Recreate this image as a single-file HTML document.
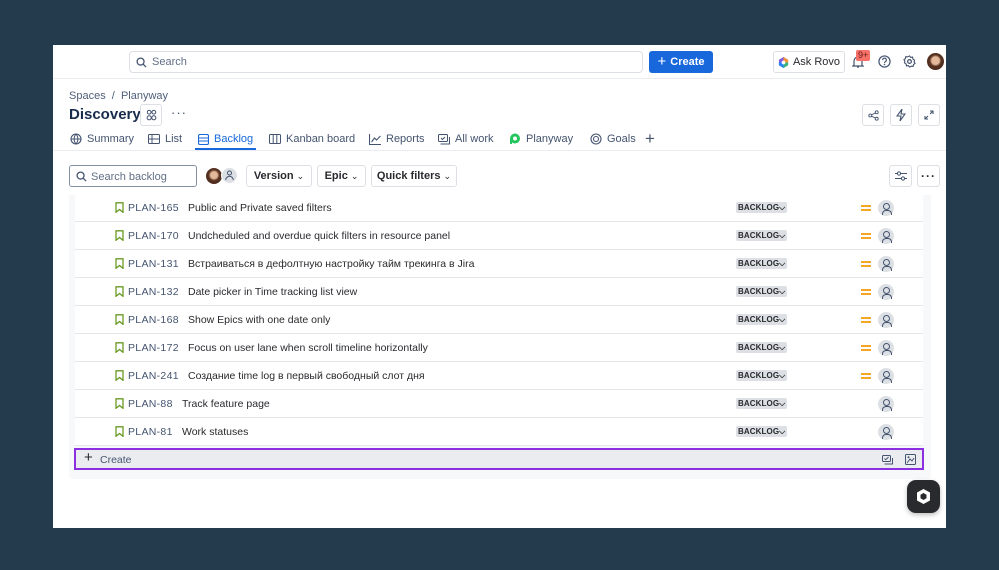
<!DOCTYPE html>
<html><head><meta charset="utf-8">
<style>
*{box-sizing:border-box;margin:0;padding:0}
body{width:999px;height:570px;background:#243b4d;font-family:"Liberation Sans","Noto Sans CJK SC",sans-serif;position:relative;overflow:hidden;color:#292a2e}
.frame{position:absolute;left:53px;top:45px;width:893px;height:483px;background:#fff;overflow:hidden}
.abs{position:absolute}
.btn{position:absolute;border:1px solid #dcdfe4;border-radius:3px;background:#fff;display:flex;align-items:center;justify-content:center;font-size:11px;color:#292a2e;font-weight:bold}
svg{display:block}
.tab{position:absolute;top:88px;font-size:11px;color:#44546f;display:flex;align-items:center;gap:5px}
.row{position:absolute;left:22px;width:848px;height:28px;background:#fff;border-bottom:1px solid #e4e6ea;font-size:10.5px;color:#292a2e}
.row .ic{position:absolute;left:40px;top:8px}
.row .k{position:absolute;left:53px;top:8px;color:#44546f;letter-spacing:0.3px}
.row .s{position:absolute;top:8px}
.row .lz{position:absolute;left:661px;top:8px;background:#dcdfe4;border-radius:2px;font-size:8px;font-weight:bold;padding:1px 2px;height:11px;line-height:9px;color:#292a2e;letter-spacing:0.1px}
.row .pr{position:absolute;left:786px;top:11px;width:10px;height:6px;border-top:2px solid #f5a623;border-bottom:2px solid #f5a623}
.row .av{position:absolute;left:803px;top:6px;width:16px;height:16px;border-radius:50%;background:#dcdfe4}
.row .av::before{content:"";position:absolute;left:5px;top:3px;width:5px;height:5px;border:1px solid #44546f;border-radius:50%}
.row .av::after{content:"";position:absolute;left:3.5px;top:9.5px;width:8px;height:4px;border:1px solid #44546f;border-bottom:none;border-radius:4px 4px 0 0}
</style></head><body>
<div class="frame">
  <div class="abs" style="left:0;top:33px;width:893px;height:1px;background:#ebecf0"></div>
  <div class="abs" style="left:76px;top:6px;width:514px;height:22px;border:1px solid #dcdfe4;border-radius:4px;font-size:11px;color:#626f86;padding:4px 0 0 22px">Search
    <svg class="abs" style="left:6px;top:5px" width="11" height="11" viewBox="0 0 12 12"><circle cx="5" cy="5" r="3.8" fill="none" stroke="#44546f" stroke-width="1.4"/><path d="M8 8l3 3" stroke="#44546f" stroke-width="1.4"/></svg></div>
  <div class="abs" style="left:596px;top:6px;width:64px;height:22px;background:#1868db;border-radius:3px;color:#fff;font-size:11px;font-weight:bold;display:flex;align-items:center;justify-content:center;gap:4px"><span style="font-size:15px;font-weight:normal;margin-top:-2px">+</span>Create</div>
  <div class="btn" style="left:720px;top:6px;width:72px;height:22px;font-weight:normal;gap:4px">
    <svg width="11" height="11" viewBox="0 0 12 12"><path d="M6 0L11 3v6L6 12 1 9V3z" fill="#7f5fe0"/><path d="M6 0L11 3v3H6z" fill="#f79232"/><path d="M1 6h5v6L1 9z" fill="#2684ff"/><path d="M6 6h5v3L6 12z" fill="#36b37e"/><circle cx="6" cy="6" r="2" fill="#fff"/></svg>Ask Rovo</div>
  <svg class="abs" style="left:799px;top:10px" width="12" height="14" viewBox="0 0 12 14"><path d="M2 10V6a4 4 0 018 0v4l1 1H1z M5 12h2" fill="none" stroke="#44546f" stroke-width="1.2"/></svg>
  <div class="abs" style="left:803px;top:5px;background:#f87168;color:#5d1f1a;font-size:9px;padding:0 2px;border-radius:2px;height:11px;line-height:11px">9+</div>
  <svg class="abs" style="left:825px;top:10px" width="13" height="13" viewBox="0 0 14 14"><circle cx="7" cy="7" r="6" fill="none" stroke="#44546f" stroke-width="1.3"/><path d="M5 5.5a2 2 0 113 1.6c-.8.5-1 .9-1 1.6" fill="none" stroke="#44546f" stroke-width="1.2"/><circle cx="7" cy="10.3" r=".8" fill="#44546f"/></svg>
  <svg class="abs" style="left:850px;top:10px" width="13" height="13" viewBox="0 0 14 14"><circle cx="7" cy="7" r="2" fill="none" stroke="#44546f" stroke-width="1.3"/><path d="M7 1l1.2 1.6 2-.4.4 2L12.4 5.6 12 7.6l1 1.4-1.6 1.2-.4 2-2-.2L7 13l-1.2-1.6-2 .4-.4-2L1.6 8.4 2 6.4 1 5l1.6-1.2.4-2 2 .2z" fill="none" stroke="#44546f" stroke-width="1.2"/></svg>
  <div class="abs" style="left:874px;top:8px;width:17px;height:17px;border-radius:50%;background:radial-gradient(circle at 50% 45%,#e3b99a 0 30%,#5a3221 45%,#3b2316 100%)"></div>

  <div class="abs" style="left:16px;top:45px;font-size:11px;color:#505f79">Spaces&nbsp;&nbsp;/&nbsp;&nbsp;Planyway</div>
  <div class="abs" style="left:16px;top:61px;font-size:15px;font-weight:bold;color:#172b4d">Discovery</div>
  <div class="btn" style="left:87px;top:59px;width:22px;height:22px"><svg width="13" height="12" viewBox="0 0 14 12"><circle cx="4.5" cy="3" r="2" fill="none" stroke="#44546f" stroke-width="1.1"/><circle cx="9.5" cy="3" r="2" fill="none" stroke="#44546f" stroke-width="1.1"/><circle cx="4.5" cy="9" r="2.2" fill="none" stroke="#44546f" stroke-width="1.1"/><circle cx="9.5" cy="9" r="2.2" fill="none" stroke="#44546f" stroke-width="1.1"/></svg></div>
  <div class="abs" style="left:118px;top:60px;font-size:13px;color:#44546f;letter-spacing:1px">···</div>
  <div class="btn" style="left:809px;top:59px;width:22px;height:22px"><svg width="11" height="11" viewBox="0 0 12 12"><circle cx="2.5" cy="6" r="1.6" fill="none" stroke="#44546f"/><circle cx="9.5" cy="2.5" r="1.6" fill="none" stroke="#44546f"/><circle cx="9.5" cy="9.5" r="1.6" fill="none" stroke="#44546f"/><path d="M4 5.2l4-2M4 6.8l4 2" stroke="#44546f"/></svg></div>
  <div class="btn" style="left:837px;top:59px;width:22px;height:22px"><svg width="10" height="12" viewBox="0 0 10 12"><path d="M6 0L1 7h4l-1 5 5-7H5z" fill="none" stroke="#44546f" stroke-width="1.1"/></svg></div>
  <div class="btn" style="left:865px;top:59px;width:22px;height:22px"><svg width="10" height="10" viewBox="0 0 10 10"><path d="M6 1h3v3M9 1L6 4M4 9H1V6M1 9l3-3" fill="none" stroke="#44546f" stroke-width="1.1"/></svg></div>

  <div class="tab" style="left:17px"><svg width="12" height="12" viewBox="0 0 12 12"><circle cx="6" cy="6" r="5" fill="none" stroke="#44546f" stroke-width="1.1"/><path d="M1 6h10M6 1c-2.5 3-2.5 7 0 10M6 1c2.5 3 2.5 7 0 10" fill="none" stroke="#44546f" stroke-width="1"/></svg>Summary</div>
  <div class="tab" style="left:95px"><svg width="12" height="10" viewBox="0 0 12 10"><rect x=".5" y=".5" width="11" height="9" rx="1" fill="none" stroke="#44546f"/><path d="M.5 5h11M4 .5v9" stroke="#44546f"/></svg>List</div>
  <div class="tab" style="left:145px;color:#1868db"><svg width="11" height="11" viewBox="0 0 11 11"><rect x=".5" y=".5" width="10" height="10" rx="1.5" fill="none" stroke="#1868db" stroke-width="1.1"/><path d="M.5 4h10M.5 7h10" stroke="#1868db"/></svg>Backlog</div>
  <div class="abs" style="left:142px;top:103px;width:61px;height:2px;background:#1868db"></div>
  <div class="tab" style="left:216px"><svg width="12" height="10" viewBox="0 0 12 10"><rect x=".5" y=".5" width="11" height="9" rx="1" fill="none" stroke="#44546f"/><path d="M4.2 .5v9M7.8 .5v9" stroke="#44546f"/></svg>Kanban board</div>
  <div class="tab" style="left:316px"><svg width="12" height="11" viewBox="0 0 12 11"><path d="M.5 0v10.5H12M2.5 8l3-4 2 2 4-4" fill="none" stroke="#44546f" stroke-width="1.1"/></svg>Reports</div>
  <div class="tab" style="left:385px"><svg width="12" height="11" viewBox="0 0 12 11"><rect x=".5" y=".5" width="9" height="7" rx="1" fill="none" stroke="#44546f"/><path d="M3 4l1.5 1.5L7 3M2.5 10h9V3" fill="none" stroke="#44546f"/></svg>All work</div>
  <div class="tab" style="left:456px"><svg width="12" height="12" viewBox="0 0 12 12"><circle cx="6" cy="5.5" r="5" fill="#22c55e"/><circle cx="6" cy="5.5" r="2" fill="#fff"/><path d="M2 11V6" stroke="#22c55e" stroke-width="2"/></svg>Planyway</div>
  <div class="tab" style="left:537px"><svg width="12" height="12" viewBox="0 0 12 12"><circle cx="6" cy="6" r="5" fill="none" stroke="#44546f" stroke-width="1.1"/><circle cx="6" cy="6" r="2.5" fill="none" stroke="#44546f" stroke-width="1.1"/></svg>Goals</div>
  <div class="abs" style="left:592px;top:84px;font-size:17px;color:#44546f">+</div>
  <div class="abs" style="left:0;top:105px;width:893px;height:1px;background:#ebecf0"></div>

  <div class="abs" style="left:16px;top:120px;width:128px;height:22px;border:1px solid #8590a2;border-radius:3px;font-size:11px;color:#626f86;padding:5px 0 0 21px">Search backlog
    <svg class="abs" style="left:6px;top:5px" width="11" height="11" viewBox="0 0 12 12"><circle cx="5" cy="5" r="3.8" fill="none" stroke="#44546f" stroke-width="1.4"/><path d="M8 8l3 3" stroke="#44546f" stroke-width="1.4"/></svg></div>
  <div class="abs" style="left:153px;top:123px;width:16px;height:16px;border-radius:50%;background:radial-gradient(circle at 50% 45%,#e3b99a 0 28%,#5a3221 45%,#3b2316 100%)"></div>
  <div class="abs" style="left:168px;top:122px;width:17px;height:17px;border-radius:50%;background:#dcdfe4;border:1px solid #fff"><svg style="margin:2px 0 0 3px" width="9" height="11" viewBox="0 0 9 11"><circle cx="4.5" cy="3" r="2" fill="none" stroke="#44546f"/><path d="M.8 10a3.7 3.7 0 017.4 0" fill="none" stroke="#44546f"/></svg></div>
  <div class="btn" style="left:193px;top:120px;width:66px;height:22px">Version&nbsp;<span style="font-weight:normal;font-size:9px">⌄</span></div>
  <div class="btn" style="left:264px;top:120px;width:49px;height:22px">Epic&nbsp;<span style="font-weight:normal;font-size:9px">⌄</span></div>
  <div class="btn" style="left:318px;top:120px;width:86px;height:22px">Quick filters&nbsp;<span style="font-weight:normal;font-size:9px">⌄</span></div>
  <div class="btn" style="left:836px;top:120px;width:23px;height:22px"><svg width="12" height="10" viewBox="0 0 12 10"><path d="M0 2.5h12M0 7.5h12" stroke="#44546f"/><circle cx="4" cy="2.5" r="1.6" fill="#fff" stroke="#44546f"/><circle cx="8" cy="7.5" r="1.6" fill="#fff" stroke="#44546f"/></svg></div>
  <div class="btn" style="left:864px;top:120px;width:23px;height:22px;letter-spacing:1px;font-size:12px">···</div>

  <div class="abs" style="left:16px;top:150px;width:862px;height:284px;background:#f7f8f9;border-radius:0 0 4px 4px"></div>
  <div class="row" style="top:149px"><svg class="ic" width="9" height="11" viewBox="0 0 9 11"><path d="M1 .8h7v9.5L4.5 7.5 1 10.3z" fill="none" stroke="#6a9a23" stroke-width="1.3"/></svg><span class="k">PLAN-165</span><span class="s" style="left:113px">Public and Private saved filters</span><span class="lz">BACKLOG⌵</span><span class="pr"></span><span class="av"></span></div>
  <div class="row" style="top:177px"><svg class="ic" width="9" height="11" viewBox="0 0 9 11"><path d="M1 .8h7v9.5L4.5 7.5 1 10.3z" fill="none" stroke="#6a9a23" stroke-width="1.3"/></svg><span class="k">PLAN-170</span><span class="s" style="left:113px">Undcheduled and overdue quick filters in resource panel</span><span class="lz">BACKLOG⌵</span><span class="pr"></span><span class="av"></span></div>
  <div class="row" style="top:205px"><svg class="ic" width="9" height="11" viewBox="0 0 9 11"><path d="M1 .8h7v9.5L4.5 7.5 1 10.3z" fill="none" stroke="#6a9a23" stroke-width="1.3"/></svg><span class="k">PLAN-131</span><span class="s" style="left:113px">Встраиваться в дефолтную настройку тайм трекинга в Jira</span><span class="lz">BACKLOG⌵</span><span class="pr"></span><span class="av"></span></div>
  <div class="row" style="top:233px"><svg class="ic" width="9" height="11" viewBox="0 0 9 11"><path d="M1 .8h7v9.5L4.5 7.5 1 10.3z" fill="none" stroke="#6a9a23" stroke-width="1.3"/></svg><span class="k">PLAN-132</span><span class="s" style="left:113px">Date picker in Time tracking list view</span><span class="lz">BACKLOG⌵</span><span class="pr"></span><span class="av"></span></div>
  <div class="row" style="top:261px"><svg class="ic" width="9" height="11" viewBox="0 0 9 11"><path d="M1 .8h7v9.5L4.5 7.5 1 10.3z" fill="none" stroke="#6a9a23" stroke-width="1.3"/></svg><span class="k">PLAN-168</span><span class="s" style="left:113px">Show Epics with one date only</span><span class="lz">BACKLOG⌵</span><span class="pr"></span><span class="av"></span></div>
  <div class="row" style="top:289px"><svg class="ic" width="9" height="11" viewBox="0 0 9 11"><path d="M1 .8h7v9.5L4.5 7.5 1 10.3z" fill="none" stroke="#6a9a23" stroke-width="1.3"/></svg><span class="k">PLAN-172</span><span class="s" style="left:113px">Focus on user lane when scroll timeline horizontally</span><span class="lz">BACKLOG⌵</span><span class="pr"></span><span class="av"></span></div>
  <div class="row" style="top:317px"><svg class="ic" width="9" height="11" viewBox="0 0 9 11"><path d="M1 .8h7v9.5L4.5 7.5 1 10.3z" fill="none" stroke="#6a9a23" stroke-width="1.3"/></svg><span class="k">PLAN-241</span><span class="s" style="left:113px">Создание time log в первый свободный слот дня</span><span class="lz">BACKLOG⌵</span><span class="pr"></span><span class="av"></span></div>
  <div class="row" style="top:345px"><svg class="ic" width="9" height="11" viewBox="0 0 9 11"><path d="M1 .8h7v9.5L4.5 7.5 1 10.3z" fill="none" stroke="#6a9a23" stroke-width="1.3"/></svg><span class="k">PLAN-88</span><span class="s" style="left:107px">Track feature page</span><span class="lz">BACKLOG⌵</span><span class="av"></span></div>
  <div class="row" style="top:373px"><svg class="ic" width="9" height="11" viewBox="0 0 9 11"><path d="M1 .8h7v9.5L4.5 7.5 1 10.3z" fill="none" stroke="#6a9a23" stroke-width="1.3"/></svg><span class="k">PLAN-81</span><span class="s" style="left:107px">Work statuses</span><span class="lz">BACKLOG⌵</span><span class="av"></span></div>
  <div class="abs" style="left:21px;top:403px;width:850px;height:22px;border:2px solid #8b2fe0;background:#ebecf0;font-size:10.5px;color:#44546f;padding:4px 0 0 24px">Create
    <span class="abs" style="left:8px;top:-1px;font-size:15px;color:#292a2e">+</span>
    <svg class="abs" style="left:806px;top:5px" width="11" height="10" viewBox="0 0 11 10"><rect x=".5" y=".5" width="8" height="6" rx="1" fill="none" stroke="#44546f"/><path d="M2.5 3.5l1.3 1.2L6.5 2M2.5 9h8V3" fill="none" stroke="#44546f"/></svg>
    <svg class="abs" style="left:829px;top:4px" width="11" height="11" viewBox="0 0 11 11"><rect x=".5" y=".5" width="10" height="10" rx="1" fill="none" stroke="#44546f"/><path d="M2 9l3-4 2 2 2-3" fill="none" stroke="#44546f"/><circle cx="3.5" cy="3.2" r="1" fill="#44546f"/></svg>
  </div>

  <div class="abs" style="left:854px;top:435px;width:33px;height:33px;border-radius:9px;background:#292a2e;box-shadow:0 2px 5px rgba(0,0,0,.25)"><svg style="margin:8px 0 0 9px" width="15" height="17" viewBox="0 0 15 17"><path d="M7.5 1L14 4.5v8L7.5 16 1 12.5v-8z" fill="#fff"/><path d="M7.5 5L10.5 6.7v3.6L7.5 12 4.5 10.3V6.7z" fill="#292a2e"/></svg></div>
</div>
</body></html>
